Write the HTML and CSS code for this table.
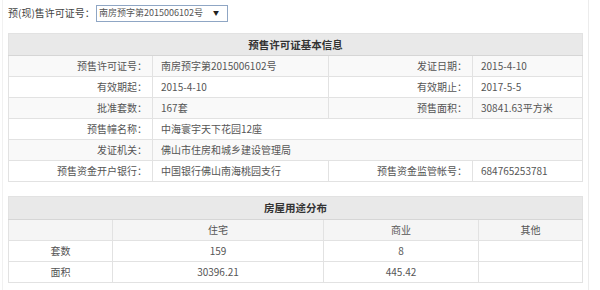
FILE: index.html
```html
<!DOCTYPE html>
<html lang="zh-CN">
<head>
<meta charset="utf-8">
<title>预售许可证</title>
<link rel="stylesheet" href="styles.css">
</head>
<body>
<div class="wrap">
  <div class="picker">
    <span class="picker-label">预(现)售许可证号：</span>
    <span class="select"><span class="select-text">南房预字第2015006102号</span><span class="arrow">▼</span></span>
  </div>

  <table class="info">
    <colgroup><col class="c1"><col class="c2"><col class="c3"><col class="c4"></colgroup>
    <tr class="head"><th colspan="4">预售许可证基本信息</th></tr>
    <tr class="alt"><td class="lbl">预售许可证号：</td><td class="val">南房预字第2015006102号</td><td class="lbl">发证日期：</td><td class="val">2015-4-10</td></tr>
    <tr><td class="lbl">有效期起：</td><td class="val">2015-4-10</td><td class="lbl">有效期止：</td><td class="val">2017-5-5</td></tr>
    <tr class="alt"><td class="lbl">批准套数：</td><td class="val">167套</td><td class="lbl">预售面积：</td><td class="val">30841.63平方米</td></tr>
    <tr><td class="lbl">预售幢名称：</td><td class="val" colspan="3">中海寰宇天下花园12座</td></tr>
    <tr class="alt"><td class="lbl">发证机关：</td><td class="val" colspan="3">佛山市住房和城乡建设管理局</td></tr>
    <tr><td class="lbl">预售资金开户银行：</td><td class="val">中国银行佛山南海桃园支行</td><td class="lbl">预售资金监管帐号：</td><td class="val">684765253781</td></tr>
  </table>

  <table class="dist">
    <colgroup><col class="d1"><col class="d2"><col class="d3"><col class="d4"></colgroup>
    <tr class="head"><th colspan="4">房屋用途分布</th></tr>
    <tr class="sub"><td></td><td>住宅</td><td>商业</td><td>其他</td></tr>
    <tr><td>套数</td><td>159</td><td>8</td><td></td></tr>
    <tr><td>面积</td><td>30396.21</td><td>445.42</td><td></td></tr>
  </table>
</div>
</body>
</html>
```

FILE: styles.css
```css
html, body {
  margin: 0;
  padding: 0;
  background: #fff;
}
body {
  font-family: "Noto Sans CJK SC", "Noto Sans", sans-serif;
  font-size: 10px;
  line-height: 14px;
  color: #555;
}
.wrap {
  margin-left: 2px;
  width: 574px;
  padding: 0 6px 6px 5px;
  border-left: 1px solid #f1f1f1;
  border-right: 1px solid #ececec;
  min-height: 290px;
}
.picker {
  display: flex;
  align-items: center;
  padding-top: 4px;
  height: 18px;
  margin-bottom: 11px;
}
.picker-label {
  color: #444;
  width: 88px;
}
.select {
  display: flex;
  align-items: center;
  justify-content: space-between;
  box-sizing: border-box;
  width: 132px;
  height: 17px;
  border: 1px solid #8fa6c4;
  padding: 0 8px 0 2px;
  font-size: 9px;
  color: #555;
  white-space: nowrap;
}
.arrow {
  font-size: 6px;
  color: #222;
}
table {
  width: 574px;
  border-collapse: collapse;
  table-layout: fixed;
  border: 1px solid #dcdcdc;
}
td, th {
  border: 1px solid #e2e2e2;
  padding: 0;
  white-space: nowrap;
}
.head th {
  background: #e9e9e9;
  color: #333;
  font-weight: bold;
  font-size: 10.5px;
  height: 21px;
  border-bottom: 1px solid #d6d6d6;
}
.info td {
  height: 20px;
}
.info .alt td {
  background: #f9f9f9;
}
.lbl {
  text-align: right;
  padding-right: 5px;
}
.val {
  text-align: left;
  padding-left: 8px;
}
.c1 { width: 144px; }
.c2 { width: 176px; }
.c3 { width: 144px; }
.c4 { width: 110px; }
.dist {
  margin-top: 14px;
}
.dist .head th {
  height: 22px;
}
.dist td {
  height: 20px;
  text-align: center;
}
.dist .sub td {
  background: #f5f5f5;
}
.d1 { width: 104px; }
.d2 { width: 211px; }
.d3 { width: 155px; }
.d4 { width: 104px; }
```
